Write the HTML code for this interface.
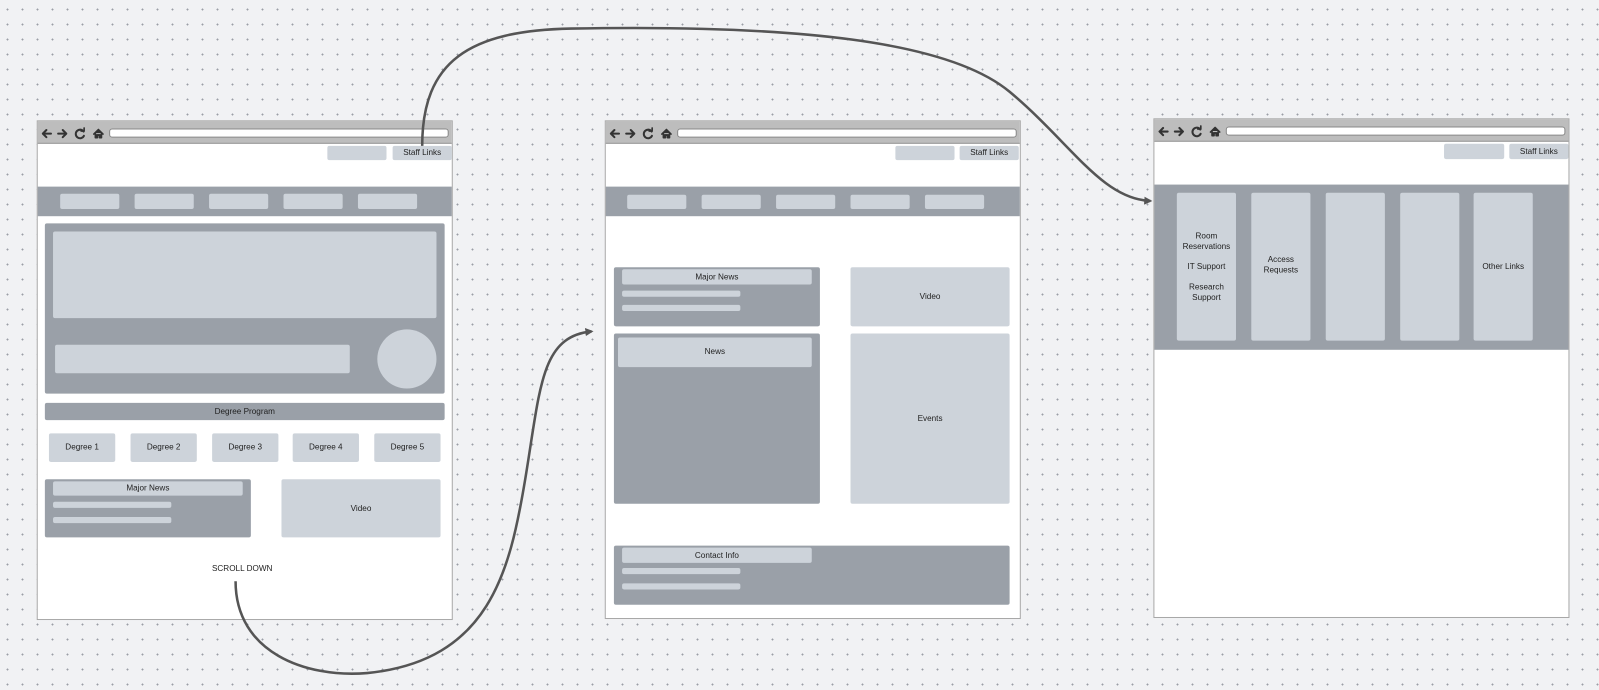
<!DOCTYPE html>
<html><head><style>
*{margin:0;padding:0;box-sizing:border-box}
body{width:1599px;height:690px;overflow:hidden;position:relative;font-family:"Liberation Sans",sans-serif;font-size:8px;color:#222;
background-color:#f1f2f4;background-image:radial-gradient(circle,#9a9ea6 0.8px,transparent 1.1px);background-size:15px 15px;background-position:0px 2px}
#w{position:absolute;left:0;top:0;width:1568px;height:677px;transform:scale(1.0198);transform-origin:0 0}
.a{position:absolute}
.win{position:absolute;background:#fff;border:1px solid #a8a8a8}
.tb{position:absolute;left:0;right:0;top:0;height:22px;background:#bdbdbd;border-bottom:1px solid #999}
.tb svg{position:absolute;left:0;top:0}
.url{position:absolute;top:7px;height:9px;right:3px;background:#fff;border:1px solid #888;border-radius:3px}
.g{position:absolute;background:#9aa0a8;border-radius:2px}
.l{position:absolute;background:#cdd3da;border-radius:2px;display:flex;align-items:center;justify-content:center;text-align:center;line-height:10px}
</style></head><body><div id="w">

<svg width="0" height="0" style="position:absolute"><defs>
<g id="icons" fill="none" stroke="#333" stroke-width="2" stroke-linecap="round" stroke-linejoin="round">
<path d="M13 12 H5 M8.5 8.5 L5 12 L8.5 15.5"/>
<path d="M20 12 H28 M24.5 8.5 L28 12 L24.5 15.5"/>
<path d="M45 10 A4.2 4.2 0 1 0 45.3 14.2"/><path d="M42.5 9.5 L45.5 9.5 L45.5 6.5" stroke-width="1.6"/>
<path d="M55 12.5 L59.5 8 L64 12.5 M56.5 11.5 V16 H58.5 V13.5 H60.5 V16 H62.5 V11.5" stroke-width="1.6" fill="#333"/>
</g></defs></svg>

<!-- Window 1 -->
<div class="win" style="left:36px;top:118px;width:408px;height:490px">
<div class="tb"><svg width="70" height="22"><use href="#icons"/></svg><div class="url" style="left:70px"></div></div>
</div>
<div class="l" style="left:321px;top:143px;width:58px;height:14px"></div>
<div class="l" style="left:385px;top:143px;width:58px;height:14px">Staff Links</div>
<div class="g" style="left:37px;top:183px;width:406px;height:29px;border-radius:0"></div>
<div class="l" style="left:59px;top:190px;width:58px;height:15px"></div>
<div class="l" style="left:132px;top:190px;width:58px;height:15px"></div>
<div class="l" style="left:205px;top:190px;width:58px;height:15px"></div>
<div class="l" style="left:278px;top:190px;width:58px;height:15px"></div>
<div class="l" style="left:351px;top:190px;width:58px;height:15px"></div>
<div class="g" style="left:44px;top:219px;width:392px;height:167px"></div>
<div class="l" style="left:52px;top:227px;width:376px;height:85px"></div>
<div class="l" style="left:54px;top:338px;width:289px;height:28px"></div>
<div class="l" style="left:370px;top:323px;width:58px;height:58px;border-radius:50%"></div>
<div class="g" style="left:44px;top:395px;width:392px;height:17px;display:flex;align-items:center;justify-content:center">Degree Program</div>
<div class="l" style="left:48px;top:425px;width:65px;height:28px">Degree 1</div>
<div class="l" style="left:128px;top:425px;width:65px;height:28px">Degree 2</div>
<div class="l" style="left:208px;top:425px;width:65px;height:28px">Degree 3</div>
<div class="l" style="left:287px;top:425px;width:65px;height:28px">Degree 4</div>
<div class="l" style="left:367px;top:425px;width:65px;height:28px">Degree 5</div>
<div class="g" style="left:44px;top:470px;width:202px;height:57px"></div>
<div class="l" style="left:52px;top:472px;width:186px;height:14px">Major News</div>
<div class="l" style="left:52px;top:492px;width:116px;height:6px"></div>
<div class="l" style="left:52px;top:507px;width:116px;height:6px"></div>
<div class="l" style="left:276px;top:470px;width:156px;height:57px">Video</div>
<div class="a" style="left:180px;top:553px;width:115px;text-align:center">SCROLL DOWN</div>

<!-- Window 2 -->
<div class="win" style="left:593px;top:118px;width:408px;height:489px">
<div class="tb"><svg width="70" height="22"><use href="#icons"/></svg><div class="url" style="left:70px"></div></div>
</div>
<div class="l" style="left:878px;top:143px;width:58px;height:14px"></div>
<div class="l" style="left:941px;top:143px;width:58px;height:14px">Staff Links</div>
<div class="g" style="left:594px;top:183px;width:406px;height:29px;border-radius:0"></div>
<div class="l" style="left:615px;top:191px;width:58px;height:14px"></div>
<div class="l" style="left:688px;top:191px;width:58px;height:14px"></div>
<div class="l" style="left:761px;top:191px;width:58px;height:14px"></div>
<div class="l" style="left:834px;top:191px;width:58px;height:14px"></div>
<div class="l" style="left:907px;top:191px;width:58px;height:14px"></div>
<div class="g" style="left:602px;top:262px;width:202px;height:58px"></div>
<div class="l" style="left:610px;top:264px;width:186px;height:15px">Major News</div>
<div class="l" style="left:610px;top:285px;width:116px;height:6px"></div>
<div class="l" style="left:610px;top:299px;width:116px;height:6px"></div>
<div class="g" style="left:602px;top:327px;width:202px;height:167px"></div>
<div class="l" style="left:606px;top:331px;width:190px;height:29px;align-items:flex-start;padding-top:9px">News</div>
<div class="l" style="left:834px;top:262px;width:156px;height:58px">Video</div>
<div class="l" style="left:834px;top:327px;width:156px;height:167px">Events</div>
<div class="g" style="left:602px;top:535px;width:388px;height:58px"></div>
<div class="l" style="left:610px;top:537px;width:186px;height:15px">Contact Info</div>
<div class="l" style="left:610px;top:557px;width:116px;height:6px"></div>
<div class="l" style="left:610px;top:572px;width:116px;height:6px"></div>

<!-- Window 3 -->
<div class="win" style="left:1131px;top:116px;width:408px;height:490px">
<div class="tb"><svg width="70" height="22"><use href="#icons"/></svg><div class="url" style="left:70px"></div></div>
</div>
<div class="l" style="left:1416px;top:141px;width:59px;height:15px"></div>
<div class="l" style="left:1480px;top:141px;width:58px;height:15px">Staff Links</div>
<div class="g" style="left:1132px;top:181px;width:406px;height:162px;border-radius:0"></div>
<div class="l" style="left:1154px;top:189px;width:58px;height:145px">Room<br>Reservations<br><br>IT Support<br><br>Research<br>Support</div>
<div class="l" style="left:1227px;top:189px;width:58px;height:145px;padding-bottom:4px">Access<br>Requests</div>
<div class="l" style="left:1300px;top:189px;width:58px;height:145px"></div>
<div class="l" style="left:1373px;top:189px;width:58px;height:145px"></div>
<div class="l" style="left:1445px;top:189px;width:58px;height:145px">Other Links</div>

<svg class="a" style="left:0;top:0" width="1568" height="677">
<defs><marker id="m" markerWidth="8" markerHeight="8" refX="6" refY="4" orient="auto" markerUnits="userSpaceOnUse"><path d="M0,0 L8,4 L0,8 Z" fill="#555"/></marker></defs>
<path d="M414 143 C 414 60, 460 30, 560 28 C 780 24, 930 40, 990 90 C 1050 140, 1080 195, 1128 197" fill="none" stroke="#555" stroke-width="2.5" marker-end="url(#m)"/>
<path d="M231 570 C 231 640, 300 665, 360 660 C 480 648, 500 560, 515 470 C 530 380, 530 330, 580 325" fill="none" stroke="#555" stroke-width="2.5" marker-end="url(#m)"/>
</svg>
</div></body></html>
